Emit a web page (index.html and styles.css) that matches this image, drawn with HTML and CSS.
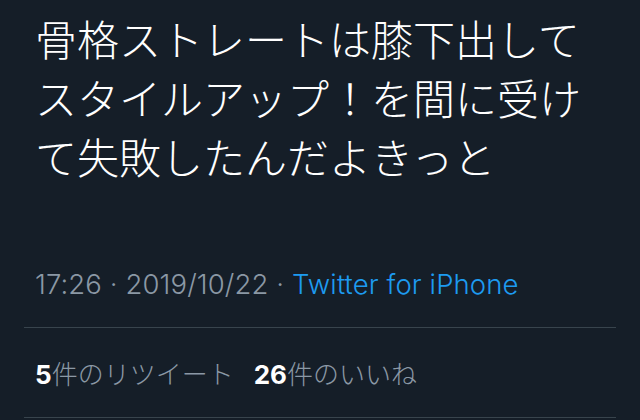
FILE: index.html
```html
<!DOCTYPE html>
<html lang="ja">
<head>
    <meta charset="UTF-8">
    <title>ツイート</title>
    <link rel="stylesheet" href="styles.css">
</head>
<body>
    <div class="tweet">
        <p class="tweet-text">骨格ストレートは膝下出して<br>スタイルアップ！を間に受け<br>て失敗したんだよきっと</p>

        <div class="meta">
            17:26 · 2019/10/22 · <span class="source">Twitter for iPhone</span>
        </div>

        <div class="stats">
            <span class="stat"><b>5</b>件のリツイート</span>
            <span class="stat"><b>26</b>件のいいね</span>
        </div>
    </div>
</body>
</html>
```

FILE: styles.css
```css
* {
    box-sizing: border-box;
    margin: 0;
    padding: 0;
}

body {
    background: #151e28;
    width: 640px;
    height: 420px;
    overflow: hidden;
    font-family: Inter, "Noto Sans CJK JP", sans-serif;
}

.tweet {
    padding: 0 24px;
}

.tweet-text {
    padding: 8px 11px 0;
    font-family: "Noto Sans CJK JP", sans-serif;
    font-size: 42px;
    font-weight: 300;
    line-height: 59px;
    color: #ffffff;
    height: 248px;
}

.meta {
    padding: 0 11px;
    height: 80px;
    line-height: 72px;
    font-size: 27.5px;
    font-weight: 300;
    letter-spacing: 0.1px;
    color: #8b98a5;
    border-bottom: 1px solid #38444d;
    white-space: nowrap;
}

.source {
    color: #1d9bf0;
}

.stats {
    padding: 0 11px;
    height: 90px;
    display: flex;
    align-items: center;
    gap: 20px;
    font-size: 26px;
    font-weight: 300;
    color: #8b98a5;
    border-bottom: 1px solid #38444d;
}

.stat b {
    color: #ffffff;
    font-weight: 700;
}
```
